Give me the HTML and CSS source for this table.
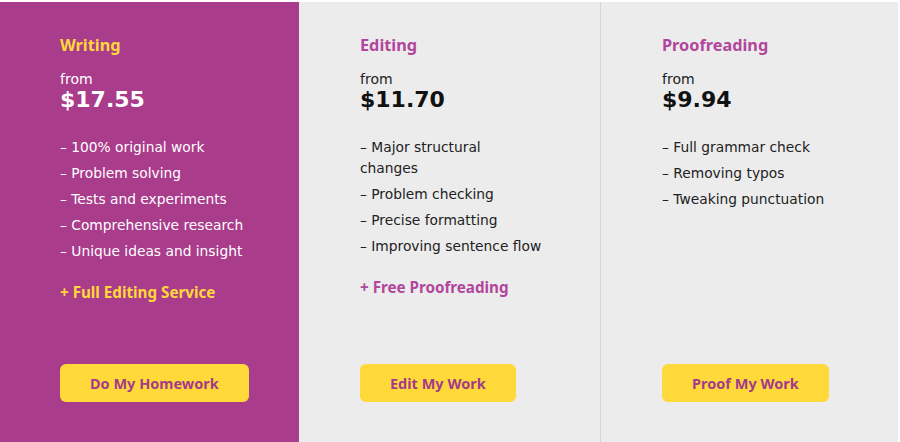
FILE: index.html
```html
<!DOCTYPE html>
<html>
  <head>
    <title>Pricing</title>
    <link rel="stylesheet" href="styles.css">
  </head>
  <body>
    <div class="pricing">
      <div class="plan plan-featured">
        <h3 class="plan-title">Writing</h3>
        <div class="plan-from">from</div>
        <div class="plan-price">$17.55</div>
        <ul class="plan-list">
          <li>– 100% original work</li>
          <li>– Problem solving</li>
          <li>– Tests and experiments</li>
          <li>– Comprehensive research</li>
          <li>– Unique ideas and insight</li>
        </ul>
        <div class="plan-extra">+ Full Editing Service</div>
        <a class="plan-btn" href="#">Do My Homework</a>
      </div>
      <div class="plan">
        <h3 class="plan-title">Editing</h3>
        <div class="plan-from">from</div>
        <div class="plan-price">$11.70</div>
        <ul class="plan-list">
          <li>– Major structural changes</li>
          <li>– Problem checking</li>
          <li>– Precise formatting</li>
          <li>– Improving sentence flow</li>
        </ul>
        <div class="plan-extra">+ Free Proofreading</div>
        <a class="plan-btn" href="#">Edit My Work</a>
      </div>
      <div class="plan plan-last">
        <h3 class="plan-title">Proofreading</h3>
        <div class="plan-from">from</div>
        <div class="plan-price">$9.94</div>
        <ul class="plan-list">
          <li>– Full grammar check</li>
          <li>– Removing typos</li>
          <li>– Tweaking punctuation</li>
        </ul>
        <a class="plan-btn" href="#">Proof My Work</a>
      </div>
    </div>
  </body>
</html>
```

FILE: styles.css
```css
body,
html {
  margin: 0;
  background: #fff;
}
body {
  padding: 2px 2px 0 0;
  font-family: "DejaVu Sans", Verdana, sans-serif;
}
.pricing {
  display: grid;
  grid-template-columns: 299px 301px 1fr;
  height: 440px;
  background: #ececec;
}
.plan {
  display: flex;
  flex-direction: column;
  align-items: flex-start;
  padding: 33px 20px 40px 61px;
  color: #222;
}
.plan-featured {
  background: #aa3c8c;
  color: #fff;
  padding-left: 60px;
}
.plan-last {
  border-left: 1px solid #d6d6d6;
}
.plan-title {
  margin: 0;
  font-family: "Noto Sans", sans-serif;
  font-size: 16.3px;
  font-weight: 700;
  line-height: 20px;
  color: #b2459c;
}
.plan-featured .plan-title {
  color: #ffd83a;
}
.plan-from {
  margin-top: 16px;
  font-size: 14px;
  line-height: 17px;
}
.plan-price {
  font-size: 22px;
  font-weight: 700;
  line-height: 24px;
  color: #111;
}
.plan-featured .plan-price {
  color: #fff;
}
.plan-list {
  list-style: none;
  margin: 25px 0 0;
  padding: 0;
  width: 182px;
  font-size: 13.8px;
  line-height: 21px;
}
.plan-featured .plan-list {
  width: 210px;
}
.plan-list li {
  margin-bottom: 5px;
}
.plan-extra {
  margin-top: 15px;
  font-family: "Noto Sans", sans-serif;
  font-size: 15.2px;
  font-weight: 700;
  line-height: 20px;
  color: #b2459c;
}
.plan-featured .plan-extra {
  color: #ffd83a;
}
.plan-btn {
  margin-top: auto;
  padding: 0 30px;
  height: 38px;
  line-height: 38px;
  border-radius: 6px;
  background: #ffd83a;
  color: #a43b8a;
  font-family: "Noto Sans", sans-serif;
  font-size: 14.5px;
  font-weight: 700;
  text-decoration: none;
}
```
